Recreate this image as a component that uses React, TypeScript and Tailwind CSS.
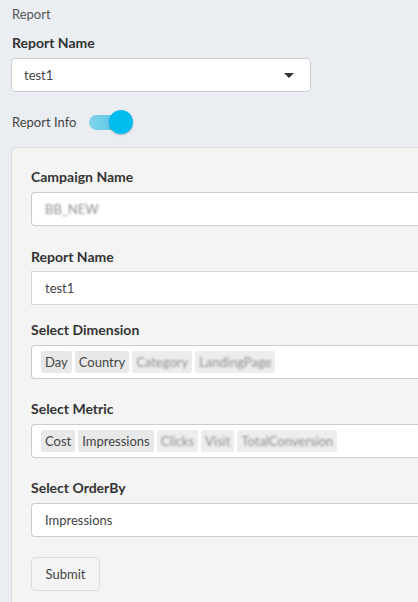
import React from "react";

const Chip = ({ children, blur }: { children: React.ReactNode; blur?: boolean }) => (
  <span className={"flex h-[22px] items-center rounded-[2px] px-[4px] shrink-0 " + (blur ? "bg-[#ededed]" : "bg-[#e8e8e8]")}>
    <span className={blur ? "text-[#8f8f8f] blur-[1.2px]" : "text-[#444]"}>{children}</span>
  </span>
);

export default function App() {
  return (
    <div
      className="w-[418px] h-[602px] overflow-hidden bg-[#eaedf2] pl-[11px] text-[13px] leading-[20px] text-[#333]"
      style={{ fontFamily: "Lato, 'Open Sans', sans-serif" }}
    >
      <div className="pt-[4px] pl-[1px] text-[13px] text-[#555]">Report</div>
      <div className="mt-[9px] pl-[1px] text-[14px] font-bold text-[#333]">Report Name</div>
      <div className="mt-[5px] flex h-[34px] w-[300px] items-center justify-between rounded-[4px] border border-[#cccccc] bg-white pl-[12px] pr-[16px] text-[#444]">
        <span>test1</span>
        <svg width="10" height="5" viewBox="0 0 10 5">
          <path d="M0 0 L10 0 L5 5 Z" fill="#333" />
        </svg>
      </div>
      <div className="mt-[18px] flex h-[24px] items-center">
        <span className="pl-[1px] text-[#444]">Report Info</span>
        <span className="relative ml-[13px] flex h-[24px] w-[44px] items-center">
          <span className="h-[15px] w-[38px] rounded-full bg-[linear-gradient(90deg,#7fd3ea,#4cc3e8)]" />
          <span className="absolute left-[20px] top-0 h-[24px] w-[24px] rounded-full bg-[#00bdf0] shadow-[0_1px_2px_rgba(0,0,0,0.25)]" />
        </span>
      </div>
      <div className="mt-[13px] rounded-tl-[4px] border-l border-t border-[#dcdcdc] bg-[#f4f4f4] pl-[19px] pt-[19px] h-[500px]">
        <div className="text-[14px] font-bold">Campaign Name</div>
        <div className="mt-[5px] flex h-[34px] items-center rounded-l-[4px] border border-r-0 border-[#cccccc] bg-white pl-[13px]">
          <span className="text-[#8f8f8f] blur-[1.2px]">BB_NEW</span>
        </div>
        <div className="mt-[21px] text-[14px] font-bold">Report Name</div>
        <div className="mt-[4px] flex h-[34px] items-center border border-r-0 border-[#d2d6de] bg-white pl-[13px] text-[#444]">
          test1
        </div>
        <div className="mt-[15px] text-[14px] font-bold">Select Dimension</div>
        <div className="mt-[5px] flex h-[34px] items-center gap-[3px] rounded-l-[4px] border border-r-0 border-[#cccccc] bg-white pl-[9px] overflow-hidden">
          <Chip>Day</Chip>
          <Chip>Country</Chip>
          <Chip blur>Category</Chip>
          <Chip blur>LandingPage</Chip>
        </div>
        <div className="mt-[20px] text-[14px] font-bold">Select Metric</div>
        <div className="mt-[5px] flex h-[34px] items-center gap-[3px] rounded-l-[4px] border border-r-0 border-[#cccccc] bg-white pl-[9px] overflow-hidden">
          <Chip>Cost</Chip>
          <Chip>Impressions</Chip>
          <Chip blur>Clicks</Chip>
          <Chip blur>Visit</Chip>
          <Chip blur>TotalConversion</Chip>
        </div>
        <div className="mt-[20px] text-[14px] font-bold">Select OrderBy</div>
        <div className="mt-[5px] flex h-[34px] items-center rounded-l-[4px] border border-r-0 border-[#cccccc] bg-white pl-[13px] text-[#444]">
          Impressions
        </div>
        <button className="mt-[20px] flex h-[34px] w-[69px] items-center justify-center rounded-[4px] border border-[#dddddd] bg-[#f4f4f4] text-[#444]">
          Submit
        </button>
      </div>
    </div>
  );
}
